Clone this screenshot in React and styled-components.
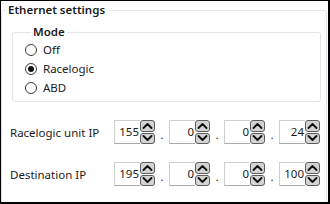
import React from 'react'
import styled, { createGlobalStyle } from 'styled-components'

const Global = createGlobalStyle`
  html, body { margin: 0; padding: 0; background: #fff; }
  body { font-family: "Noto Sans", "Open Sans", sans-serif; font-size: 11.5px; color: #1b1b1b; }
`

const Frame = styled.div`
  box-sizing: border-box;
  width: 330px;
  height: 204px;
  border: 1px solid #000;
  border-right-width: 2px;
  border-bottom-width: 2px;
  background: #fff;
  overflow: hidden;
`

const Group = styled.fieldset`
  margin: 0 1px 0 0;
  padding: 0;
  height: 220px;
  border: 1px solid #e2e6eb;
  border-radius: 3px;
  min-width: 0;
`

const Legend = styled.legend`
  margin-left: ${p => p.$indent}px;
  padding: 0 2px;
  line-height: ${p => p.$lh}px;
  font-weight: 600;
  color: #1a1a1a;
`

const ModeBox = styled.fieldset`
  margin: 5px 5px 0 10px;
  padding: 0 0 4px 12px;
  border: 1px solid #e2e6eb;
  border-radius: 3px;
`

const RadioRow = styled.label`
  display: flex;
  align-items: center;
  gap: 6px;
  height: 19px;
`

const Circle = styled.span`
  box-sizing: border-box;
  width: 12px;
  height: 12px;
  border: 1px solid #3a3a3a;
  border-radius: 50%;
  display: flex;
  align-items: center;
  justify-content: center;
  &::after {
    content: '';
    width: 6px;
    height: 6px;
    border-radius: 50%;
    background: ${p => (p.$on ? '#111' : 'transparent')};
  }
`

const IpRow = styled.div`
  display: flex;
  align-items: center;
  margin: ${p => p.$top}px 0 0 8px;
  height: 24px;
`

const IpLabel = styled.span`
  width: 104px;
`

const Spin = styled.div`
  display: flex;
  height: 24px;
  width: 41px;
`

const Field = styled.div`
  flex: 1;
  box-sizing: border-box;
  border: 1px solid #cfcfcf;
  border-right: none;
  border-bottom-color: #a9a9a9;
  text-align: right;
  line-height: 22px;
  padding-right: 1px;
`

const Buttons = styled.div`
  display: flex;
  flex-direction: column;
  gap: 1px;
  width: 15px;
`

const Arrow = styled.div`
  box-sizing: border-box;
  height: 11.5px;
  border: 1px solid #5c5c5c;
  border-radius: 3px;
  background: #d4d4d4;
  display: flex;
  align-items: center;
  justify-content: center;
`

const Dot = styled.span`
  width: 14px;
  text-align: center;
  padding-top: 5px;
`

function Chevron({ up }) {
  return (
    <svg width="11" height="8" viewBox="0 0 11 8">
      <polyline
        points={up ? '1.5,6 5.5,2 9.5,6' : '1.5,2 5.5,6 9.5,2'}
        fill="none"
        stroke="#111"
        strokeWidth="1.9"
        strokeLinejoin="round"
        strokeLinecap="round"
      />
    </svg>
  )
}

function Spinner({ value }) {
  return (
    <Spin>
      <Field>{value}</Field>
      <Buttons>
        <Arrow><Chevron up /></Arrow>
        <Arrow><Chevron /></Arrow>
      </Buttons>
    </Spin>
  )
}

function Ip({ label, parts, top }) {
  return (
    <IpRow $top={top}>
      <IpLabel>{label}</IpLabel>
      {parts.map((v, i) => (
        <React.Fragment key={i}>
          {i > 0 && <Dot>.</Dot>}
          <Spinner value={v} />
        </React.Fragment>
      ))}
    </IpRow>
  )
}

const modes = ['Off', 'Racelogic', 'ABD']

export default function App() {
  return (
    <>
      <Global />
      <Frame>
        <Group>
          <Legend $indent={4} $lh={18}>Ethernet settings</Legend>
          <ModeBox>
            <Legend $indent={6} $lh={16}>Mode</Legend>
            {modes.map(m => (
              <RadioRow key={m}>
                <Circle $on={m === 'Racelogic'} />
                {m}
              </RadioRow>
            ))}
          </ModeBox>
          <Ip label="Racelogic unit IP" parts={[155, 0, 0, 24]} top={18} />
          <Ip label="Destination IP" parts={[195, 0, 0, 100]} top={18} />
        </Group>
      </Frame>
    </>
  )
}
